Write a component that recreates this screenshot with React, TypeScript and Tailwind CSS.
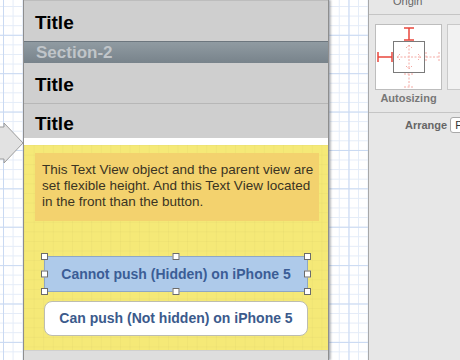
import React from "react";

// canvas grid giống Interface Builder
const gridBg =
  "bg-white bg-[linear-gradient(to_right,#c9d9f2_1px,transparent_1px),linear-gradient(to_bottom,#c9d9f2_1px,transparent_1px),linear-gradient(to_right,#e4ecf8_1px,transparent_1px),linear-gradient(to_bottom,#e4ecf8_1px,transparent_1px)] bg-[size:38.4px_38.4px,38.4px_38.4px,9.6px_9.6px,9.6px_9.6px] bg-[position:3px_34.8px,3px_34.8px,3px_6px,3px_6px]";

function Handle({ className }: { className: string }) {
  return (
    <span
      className={`absolute w-[7px] h-[7px] bg-white border border-[#6b6b6b] ${className}`}
    />
  );
}

function TitleRow({ h, pad, border }: { h: string; pad: string; border?: boolean }) {
  return (
    <div
      className={`${h} ${pad} flex items-center pl-[11px] bg-[#cfcfcf] ${
        border ? "border-b border-[#b7b7b7]" : ""
      }`}
    >
      <span className="text-[19px] font-bold text-black leading-none">Title</span>
    </div>
  );
}

function AutosizingIcon() {
  return (
    <svg className="shrink-0" width="67" height="66" viewBox="0 0 67 66">
      <rect x="0.5" y="0.5" width="66" height="65" fill="#fff" stroke="#bdbdbd" />
      <rect x="18.5" y="17.5" width="31" height="31" fill="#fff" stroke="#7a7a7a" />
      {/* struts */}
      <g stroke="#e9463b" strokeWidth="1.5">
        <line x1="34" y1="4" x2="34" y2="16" />
        <line x1="29" y1="4" x2="39" y2="4" />
        <line x1="29" y1="16" x2="39" y2="16" />
        <line x1="3" y1="33" x2="17" y2="33" />
        <line x1="3" y1="28" x2="3" y2="38" />
        <line x1="17" y1="28" x2="17" y2="38" />
      </g>
      <g stroke="#f4aaa4" strokeWidth="1" strokeDasharray="2 1.5" fill="none">
        <line x1="51" y1="33" x2="64" y2="33" />
        <line x1="64" y1="28" x2="64" y2="38" />
        <line x1="51" y1="28" x2="51" y2="38" />
        <line x1="34" y1="50" x2="34" y2="63" />
        <line x1="29" y1="63" x2="39" y2="63" />
        <line x1="29" y1="50" x2="39" y2="50" />
        <line x1="22" y1="33" x2="46" y2="33" />
        <line x1="34" y1="21" x2="34" y2="45" />
        <polyline points="25,30 22,33 25,36" />
        <polyline points="43,30 46,33 43,36" />
        <polyline points="31,24 34,21 37,24" />
        <polyline points="31,42 34,45 37,42" />
      </g>
    </svg>
  );
}

export default function App() {
  return (
    <div
      className={`w-[460px] h-[360px] flex overflow-hidden font-['Liberation_Sans',Arial,sans-serif] ${gridBg}`}
    >
      {/* mũi tên entry point */}
      <div className="w-[23px] shrink-0 relative">
        <svg
          className="absolute left-0 top-[122px]"
          width="24"
          height="42"
          viewBox="0 0 24 42"
        >
          <polygon
            points="-4,5 4,5 4,1 23,21 4,41 4,37 -4,37"
            fill="#e2e2e2"
            stroke="#9c9c9c"
            strokeWidth="1"
          />
        </svg>
      </div>

      {/* phone view */}
      <div className="w-[306px] h-[360px] shrink-0 flex flex-col border-l border-r border-[#8e8e8e] shadow-[2px_0_2px_rgba(0,0,0,0.25)]">
        <div className="h-[41px] pt-[2px] flex items-center pl-[11px] bg-[#cfcfcf] border-t border-[#bdbdbd]">
          <span className="text-[19px] font-bold text-black leading-none">Title</span>
        </div>
        <div className="h-[22px] flex items-center pl-[12px] border-t border-[#6c767e] bg-[linear-gradient(to_bottom,#909ba2,#78838b)]">
          <span className="text-[17px] font-bold text-[#c0c5c9] leading-none">Section-2</span>
        </div>
        <TitleRow h="h-[41px]" pad="pt-[2px]" border />
        <TitleRow h="h-[34px]" pad="pt-[5px]" />
        <div className="h-[7px] bg-white" />

        <div className="h-[205px] flex flex-col bg-[#f5e977] bg-[linear-gradient(to_right,rgba(0,0,0,0.025)_1px,transparent_1px),linear-gradient(to_bottom,rgba(0,0,0,0.025)_1px,transparent_1px)] bg-[size:9.6px_9.6px]">
          <div className="ml-[11px] mr-[9px] mt-[8px] h-[68px] bg-[#f3d26e] pl-[7px] pr-[5px] pt-[9px] text-[13.5px] leading-[16px] text-[#3a3423]">
            This Text View object and the parent view are set flexible height. And this Text View located in the front than the button.
          </div>

          <div className="relative mx-[20px] mt-[35px] h-[36px] rounded-[4px] bg-[#aecaea] border border-[#8ea7c4] flex items-center justify-center">
            <span className="text-[14px] font-bold text-[#3b5d96] whitespace-nowrap">
              Cannot push (Hidden) on iPhone 5
            </span>
            <Handle className="-left-[4px] -top-[4px]" />
            <Handle className="left-1/2 -translate-x-1/2 -top-[4px]" />
            <Handle className="-right-[4px] -top-[4px]" />
            <Handle className="-left-[4px] top-1/2 -translate-y-1/2" />
            <Handle className="-right-[4px] top-1/2 -translate-y-1/2" />
            <Handle className="-left-[4px] -bottom-[4px]" />
            <Handle className="left-1/2 -translate-x-1/2 -bottom-[4px]" />
            <Handle className="-right-[4px] -bottom-[4px]" />
          </div>

          <div className="mx-[20px] mt-[9px] h-[35px] rounded-[8px] bg-white border border-[#bdbdb0] flex items-center justify-center">
            <span className="text-[14px] font-bold text-[#3b5a8c] whitespace-nowrap">
              Can push (Not hidden) on iPhone 5
            </span>
          </div>
        </div>

        <div className="flex-1 bg-[#dedede] border-t border-[#d0d0d0]" />
      </div>

      <div className="w-[39px] shrink-0" />

      {/* size inspector */}
      <div className="w-[92px] shrink-0 h-[360px] bg-[#e7e7e7] border-l border-[#a8a8a8] flex flex-col text-[11px] overflow-hidden">
        <div className="h-[15px] border-b border-[#c5c5c5] overflow-hidden pl-[24px]">
          <div className="-mt-[7px] text-[#666]">Origin</div>
        </div>
        <div className="flex gap-[5px] pl-[6px] pt-[9px]">
          <AutosizingIcon />
          <div className="w-[20px] h-[66px] shrink-0 bg-[#f2f2f2] border border-[#c9c9c9]" />
        </div>
        <div className="w-[67px] ml-[6px] mt-[1px] text-center font-bold text-[#777] leading-[14px]">
          Autosizing
        </div>
        <div className="mt-[7px] border-b border-[#c5c5c5]" />
        <div className="flex items-center gap-[3px] mt-[4px] pl-[36px]">
          <span className="font-bold text-[#666]">Arrange</span>
          <div className="h-[16px] w-[20px] shrink-0 rounded-[3px] bg-white border border-[#a9a9a9] pl-[4px] leading-[14px] text-[#333]">
            P
          </div>
        </div>
      </div>
    </div>
  );
}
